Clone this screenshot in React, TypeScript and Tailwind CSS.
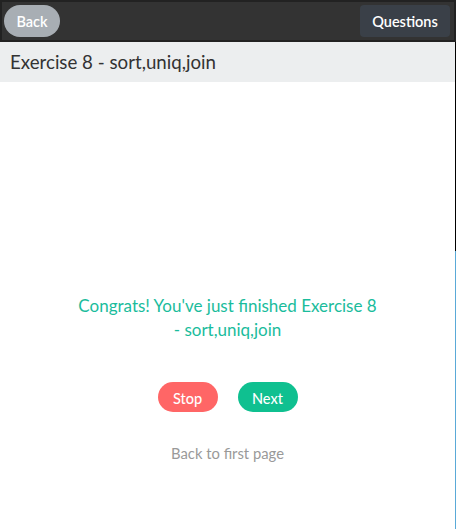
import React from "react";

export default function App() {
  return (
    <div
      className="w-[456px] h-[529px] flex flex-col bg-white overflow-hidden"
      style={{ fontFamily: "Lato, 'Open Sans', sans-serif" }}
    >
      <div className="h-[42px] bg-[#222222] p-[2px] flex">
        <div className="flex-1 bg-[#333333] flex items-center justify-between pl-[2px] pr-[4px]">
          <button className="h-[32px] w-[56px] pt-[2px] rounded-full bg-[#a8aeb4] text-white text-[14.5px] font-semibold">
            Back
          </button>
          <button className="h-[32px] w-[90px] pt-[2px] rounded-[4px] bg-[#3a4048] text-white text-[14.5px] font-semibold">
            Questions
          </button>
        </div>
      </div>
      <div className="flex-1 flex">
        <div className="flex-1 flex flex-col">
          <div className="h-[40px] bg-[#eceeef] flex items-center px-[10px] text-[18.7px] text-[#333333]">
            Exercise 8 - sort,uniq,join
          </div>
          <div className="flex-1 flex flex-col items-center">
            <div className="mt-[212px] w-[302px] text-center text-[17px] leading-[24px] text-[#1abc9c]">
              Congrats! You've just finished Exercise 8 - sort,uniq,join
            </div>
            <div className="mt-[40px] flex gap-[20px]">
              <button className="h-[30px] w-[60px] pt-[3px] rounded-full bg-[#ff6666] text-white text-[14.5px] font-medium">
                Stop
              </button>
              <button className="h-[30px] w-[60px] pt-[3px] rounded-full bg-[#0fc090] text-white text-[14.5px] font-medium">
                Next
              </button>
            </div>
            <div className="mt-[31px] text-[14.8px] leading-[20px] text-[#999999]">Back to first page</div>
          </div>
        </div>
        <div className="w-px flex flex-col">
          <div className="h-[209px] bg-black" />
          <div className="flex-1 bg-[#5aaad8]" />
        </div>
      </div>
    </div>
  );
}
